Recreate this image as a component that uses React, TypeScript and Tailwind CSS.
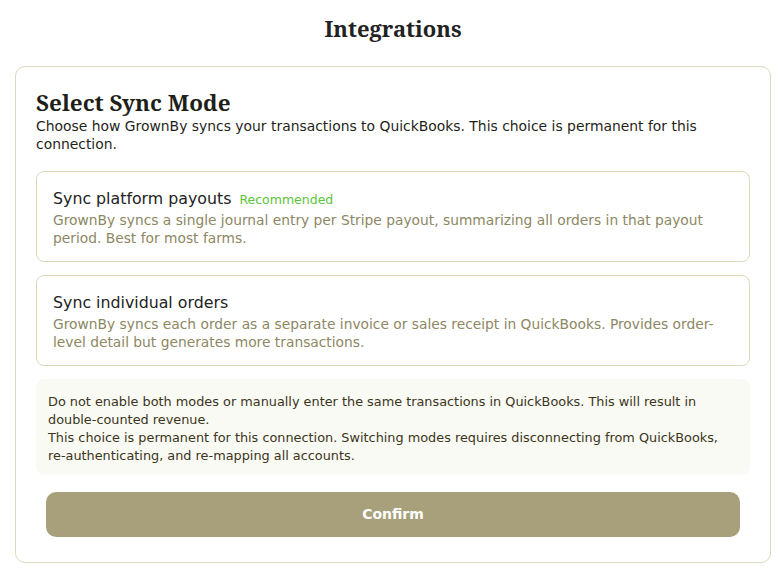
const sans = 'font-["DejaVu_Sans",sans-serif]';

interface OptionCardProps {
  title: string;
  badge?: string;
  description: string;
}

const OptionCard = ({ title, badge, description }: OptionCardProps) => (
  <div className="rounded-lg border border-[#dcd9b8] bg-white px-4 pt-[15px] pb-[14px]">
    <div className="flex h-6 items-baseline gap-2 leading-6">
      <span className="text-[15.8px] leading-6 text-[#222]">{title}</span>
      {badge && <span className="text-[12.5px] leading-6 text-[#5cc33a]">{badge}</span>}
    </div>
    <p className="text-[13.8px] leading-[18px] text-[#8d8763]">{description}</p>
  </div>
);

export default function App() {
  return (
    <div className={`min-h-screen bg-white pt-3 pr-[10px] pl-[15px] ${sans}`}>
      <h1 className='text-center font-["Noto_Serif",serif] text-[22px] leading-8 font-bold text-[#222]'>
        Integrations
      </h1>

      <div className="mt-[22px] rounded-[10px] border border-[#dcd9c0] px-5 pt-[22px] pb-[25px]">
        <h2 className='font-["Noto_Serif",serif] text-[22.5px] leading-7 font-bold text-[#1f1f1a]'>
          Select Sync Mode
        </h2>
        <p className="text-[13.9px] leading-[18px] text-[#1f1f1a]">
          Choose how GrownBy syncs your transactions to QuickBooks. This choice is permanent for this connection.
        </p>

        <div className="mt-[18px] flex flex-col gap-[13px]">
          <OptionCard
            title="Sync platform payouts"
            badge="Recommended"
            description="GrownBy syncs a single journal entry per Stripe payout, summarizing all orders in that payout period. Best for most farms."
          />
          <OptionCard
            title="Sync individual orders"
            description="GrownBy syncs each order as a separate invoice or sales receipt in QuickBooks. Provides order-level detail but generates more transactions."
          />
        </div>

        {/* Warning */}
        <div className="mt-[13px] rounded-lg bg-[#fafaf4] px-3 pt-[14px] pb-[10px] text-[12.85px] leading-[18px] text-[#3b3520]">
          <p>
            Do not enable both modes or manually enter the same transactions in QuickBooks. This will result in
            double-counted revenue.
          </p>
          <p>
            This choice is permanent for this connection. Switching modes requires disconnecting from QuickBooks,
            re-authenticating, and re-mapping all accounts.
          </p>
        </div>

        <div className="px-2.5 pt-[17px]">
          <button
            type="button"
            className="h-[45px] w-full rounded-[10px] bg-[#a8a07a] text-[14px] font-semibold text-white"
          >
            Confirm
          </button>
        </div>
      </div>
    </div>
  );
}
